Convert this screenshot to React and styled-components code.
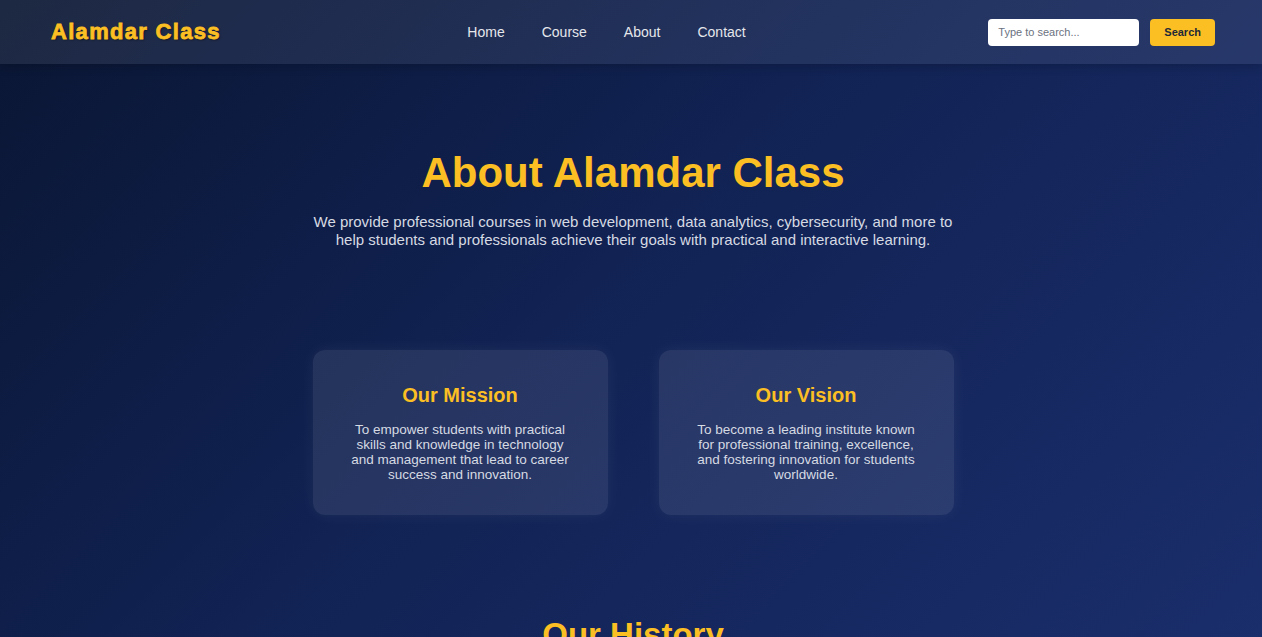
import React from 'react';
import styled, { createGlobalStyle } from 'styled-components';

const GlobalStyle = createGlobalStyle`
  html, body {
    margin: 0;
    padding: 0;
  }
  body {
    font-family: "Liberation Sans", Arial, sans-serif;
    background: linear-gradient(135deg, #0a1633 0%, #112253 45%, #1a2e6c 100%);
    min-height: 100vh;
    overflow-x: hidden;
  }
`;

const Page = styled.div`
  min-height: 100vh;
`;

const Navbar = styled.header`
  height: 64px;
  display: flex;
  align-items: center;
  justify-content: space-between;
  padding: 0 47px 0 51px;
  background: rgba(255, 255, 255, 0.08);
  box-shadow: 0 2px 10px rgba(0, 0, 0, 0.2);
`;

const Logo = styled.div`
  color: #fbbf24;
  font-size: 22px;
  font-weight: 700;
  letter-spacing: 1.3px;
  -webkit-text-stroke: 0.8px #fbbf24;
  text-shadow: 1px 1px 2px rgba(0, 0, 0, 0.6);
`;

const NavLinks = styled.nav`
  display: flex;
  gap: 37px;
  margin-left: 4px;
`;

const NavLink = styled.a`
  color: #e5e7eb;
  font-size: 14px;
  text-decoration: none;
  cursor: pointer;
`;

const SearchBox = styled.div`
  display: flex;
  align-items: center;
  gap: 11px;
`;

const SearchInput = styled.input`
  width: 151px;
  height: 27px;
  box-sizing: border-box;
  border: none;
  border-radius: 4px;
  padding: 0 10px;
  font-family: "Liberation Sans", Arial, sans-serif;
  font-size: 11px;
  outline: none;
  &::placeholder {
    color: #6b7280;
  }
`;

const SearchButton = styled.button`
  height: 27px;
  padding: 0 14px;
  border: none;
  border-radius: 4px;
  background: #fbbf24;
  color: #1f2937;
  font-family: "Liberation Sans", Arial, sans-serif;
  font-size: 11px;
  font-weight: 700;
  cursor: pointer;
`;

const Hero = styled.section`
  padding: 85px 20px 0 24px;
  text-align: center;
`;

const Title = styled.h1`
  margin: 0;
  font-size: 42px;
  line-height: 48px;
  font-weight: 700;
  color: #fbbf24;
`;

const Intro = styled.p`
  margin: 16px auto 0;
  max-width: 660px;
  font-size: 15px;
  line-height: 18px;
  color: #d6dae3;
`;

const Cards = styled.div`
  display: flex;
  justify-content: center;
  gap: 51px;
  margin-top: 101px;
`;

const Card = styled.div`
  width: 295px;
  box-sizing: border-box;
  padding: 34px 34px 33px;
  border-radius: 12px;
  background: rgba(255, 255, 255, 0.09);
  box-shadow: 0 0 16px rgba(255, 255, 255, 0.06);
  text-align: center;
`;

const CardTitle = styled.h3`
  margin: 0;
  font-size: 20px;
  line-height: 23px;
  color: #fbbf24;
`;

const CardText = styled.p`
  margin: 15px 0 0;
  font-size: 13.5px;
  line-height: 15px;
  color: #d6dae3;
`;

const SectionTitle = styled.h2`
  margin: 101px 0 0;
  font-size: 33px;
  line-height: 38px;
  color: #fbbf24;
`;

const cards = [
  {
    title: 'Our Mission',
    text: 'To empower students with practical skills and knowledge in technology and management that lead to career success and innovation.',
  },
  {
    title: 'Our Vision',
    text: 'To become a leading institute known for professional training, excellence, and fostering innovation for students worldwide.',
  },
];

export default function App() {
  return (
    <Page>
      <GlobalStyle />
      <Navbar>
        <Logo>Alamdar Class</Logo>
        <NavLinks>
          <NavLink>Home</NavLink>
          <NavLink>Course</NavLink>
          <NavLink>About</NavLink>
          <NavLink>Contact</NavLink>
        </NavLinks>
        <SearchBox>
          <SearchInput placeholder="Type to search..." />
          <SearchButton>Search</SearchButton>
        </SearchBox>
      </Navbar>

      <Hero>
        <Title>About Alamdar Class</Title>
        <Intro>
          We provide professional courses in web development, data analytics, cybersecurity, and more to
          help students and professionals achieve their goals with practical and interactive learning.
        </Intro>

        <Cards>
          {cards.map((c) => (
            <Card key={c.title}>
              <CardTitle>{c.title}</CardTitle>
              <CardText>{c.text}</CardText>
            </Card>
          ))}
        </Cards>

        <SectionTitle>Our History</SectionTitle>
      </Hero>
    </Page>
  );
}
